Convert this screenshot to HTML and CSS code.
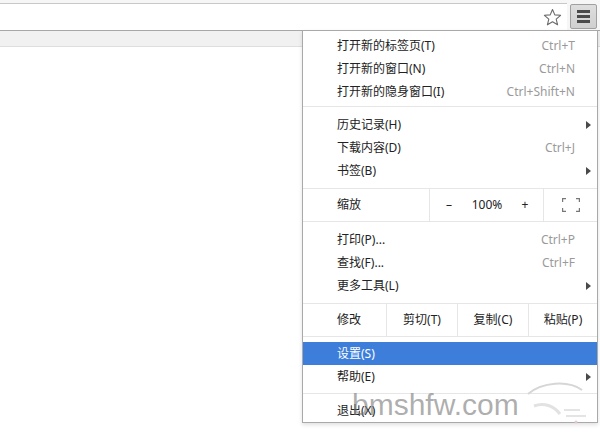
FILE: index.html
```html
<!DOCTYPE html>
<html lang="zh-CN">

<head>
  <meta charset="UTF-8" />
  <meta name="viewport" content="width=device-width, initial-scale=1.0" />
  <title>菜单</title>
  <link rel="stylesheet" href="styles.css">
</head>

<body>
  <div class="toolbar">
    <div class="omnibox">
      <svg class="star" width="19" height="19" viewBox="0 0 19 19">
        <path d="M9.5 1.5 L11.8 6.9 L17.6 7.3 L13.2 11.1 L14.6 16.8 L9.5 13.7 L4.4 16.8 L5.8 11.1 L1.4 7.3 L7.2 6.9 Z"
          fill="none" stroke="#6a6a6a" stroke-width="1.1" stroke-linejoin="round" />
      </svg>
    </div>
    <button class="menu-btn">
      <span></span><span></span><span></span>
    </button>
  </div>
  <div class="strip"></div>

  <!-- 下拉菜单 -->
  <div class="menu">
    <ul class="group g-first">
      <li><span>打开新的标签页(T)</span><em>Ctrl+T</em></li>
      <li><span>打开新的窗口(N)</span><em>Ctrl+N</em></li>
      <li><span>打开新的隐身窗口(I)</span><em>Ctrl+Shift+N</em></li>
    </ul>
    <ul class="group">
      <li class="sub"><span>历史记录(H)</span><i class="arrow"></i></li>
      <li><span>下载内容(D)</span><em>Ctrl+J</em></li>
      <li class="sub"><span>书签(B)</span><i class="arrow"></i></li>
    </ul>
    <div class="zoom-row">
      <div class="zoom-label">缩放</div>
      <div class="zoom-ctrl">
        <span>–</span><span>100%</span><span>+</span>
      </div>
      <div class="fullscreen">
        <svg width="18" height="14" viewBox="0 0 18 14">
          <path d="M0.5 4 V0.5 H4 M14 0.5 H17.5 V4 M17.5 10 V13.5 H14 M4 13.5 H0.5 V10" fill="none" stroke="#777"
            stroke-width="1.4" />
        </svg>
      </div>
    </div>
    <ul class="group">
      <li><span>打印(P)...</span><em>Ctrl+P</em></li>
      <li><span>查找(F)...</span><em>Ctrl+F</em></li>
      <li class="sub"><span>更多工具(L)</span><i class="arrow"></i></li>
    </ul>
    <div class="edit-row">
      <div class="edit-label">修改</div>
      <div class="edit-btn">剪切(T)</div>
      <div class="edit-btn">复制(C)</div>
      <div class="edit-btn last">粘贴(P)</div>
    </div>
    <ul class="group g-help">
      <li class="active"><span>设置(S)</span></li>
      <li class="sub"><span>帮助(E)</span><i class="arrow"></i></li>
    </ul>
    <ul class="group g-last">
      <li><span>退出(X)</span></li>
    </ul>
  </div>

  <div class="watermark">
    bmshfw.com
    <svg class="mark-logo" width="80" height="60" viewBox="0 0 80 60">
      <path d="M8 18 C22 6 48 4 62 14" fill="none" stroke="#d6d6d6" stroke-width="2" />
      <path d="M14 30 C24 26 34 30 40 38" fill="none" stroke="#e2e2e2" stroke-width="3" />
      <path d="M44 34 L60 34 M46 40 L66 40" stroke="#e4e4e4" stroke-width="2" />
      <circle cx="56" cy="46" r="1.5" fill="#e6c6c6" />
    </svg>
  </div>
</body>

</html>
```

FILE: styles.css
```css
* {
  margin: 0;
  padding: 0;
  box-sizing: border-box;
}

body {
  width: 600px;
  height: 436px;
  background: #fff;
  font-family: "Noto Sans", "Noto Sans CJK SC", sans-serif;
  font-size: 12px;
  color: #222;
  overflow: hidden;
  position: relative;
}

ul {
  list-style: none;
}

/* 顶部工具栏 */
.toolbar {
  height: 31px;
  padding-top: 3px;
  background: #f6f6f6;
  border-bottom: 1px solid #a8a8a8;
  display: flex;
}

.omnibox {
  flex: 1;
  background: #fff;
  border-top: 1px solid #c8c8c8;
  display: flex;
  align-items: center;
  justify-content: flex-end;
  padding-right: 5px;
}

.menu-btn {
  width: 27px;
  height: 25px;
  margin: 1px 3px 0 3px;
  border: 1px solid #a0a0a0;
  border-radius: 2px;
  background: linear-gradient(#dedede, #cfcfcf);
  display: flex;
  flex-direction: column;
  align-items: center;
  justify-content: center;
  gap: 2px;
}

.menu-btn span {
  width: 13px;
  height: 3px;
  background: #4a4a4a;
}

.strip {
  height: 16px;
  background: #f1f1f1;
  border-bottom: 1px solid #dedede;
}

/* 菜单 */
.menu {
  position: absolute;
  left: 302px;
  top: 30px;
  width: 296px;
  background: #fff;
  border: 1px solid #a9a9a9;
  box-shadow: 0 2px 4px rgba(0, 0, 0, .12);
}

.group {
  padding: 6px 0;
  border-bottom: 1px solid #e6e6e6;
}

.g-first {
  padding: 3px 0;
}

.g-help {
  padding: 5px 0;
}

.g-last {
  padding: 5px 0 0;
  border-bottom: none;
}

.group li {
  height: 23px;
  line-height: 23px;
  padding: 0 22px 0 34px;
  display: flex;
  justify-content: space-between;
  align-items: center;
}

.group li em {
  font-style: normal;
  color: #9a9a9a;
}

.group li.active {
  background: #3d7edb;
  color: #fff;
}

.arrow {
  width: 0;
  height: 0;
  margin-right: -16px;
  border-left: 5px solid #4a4a4a;
  border-top: 4px solid transparent;
  border-bottom: 4px solid transparent;
}

.zoom-row,
.edit-row {
  display: flex;
  height: 33px;
  line-height: 32px;
  border-bottom: 1px solid #e6e6e6;
}

.zoom-label {
  width: 126px;
  padding-left: 34px;
}

.zoom-ctrl {
  width: 114px;
  border-left: 1px solid #e6e6e6;
  display: grid;
  grid-template-columns: 38px 38px 38px;
  text-align: center;
}

.fullscreen {
  flex: 1;
  border-left: 1px solid #e6e6e6;
  display: flex;
  align-items: center;
  justify-content: center;
}

.edit-label {
  width: 83px;
  padding-left: 34px;
}

.edit-btn {
  width: 71px;
  border-left: 1px solid #e6e6e6;
  text-align: center;
}

.edit-btn.last {
  flex: 1;
}

/* 水印 */
.watermark {
  position: absolute;
  left: 352px;
  top: 390px;
  font-family: "Liberation Sans", Arial, sans-serif;
  font-size: 30px;
  line-height: 30px;
  color: rgba(120, 120, 120, .6);
  white-space: nowrap;
  pointer-events: none;
}

.mark-logo {
  position: absolute;
  left: 168px;
  top: -14px;
}
```
